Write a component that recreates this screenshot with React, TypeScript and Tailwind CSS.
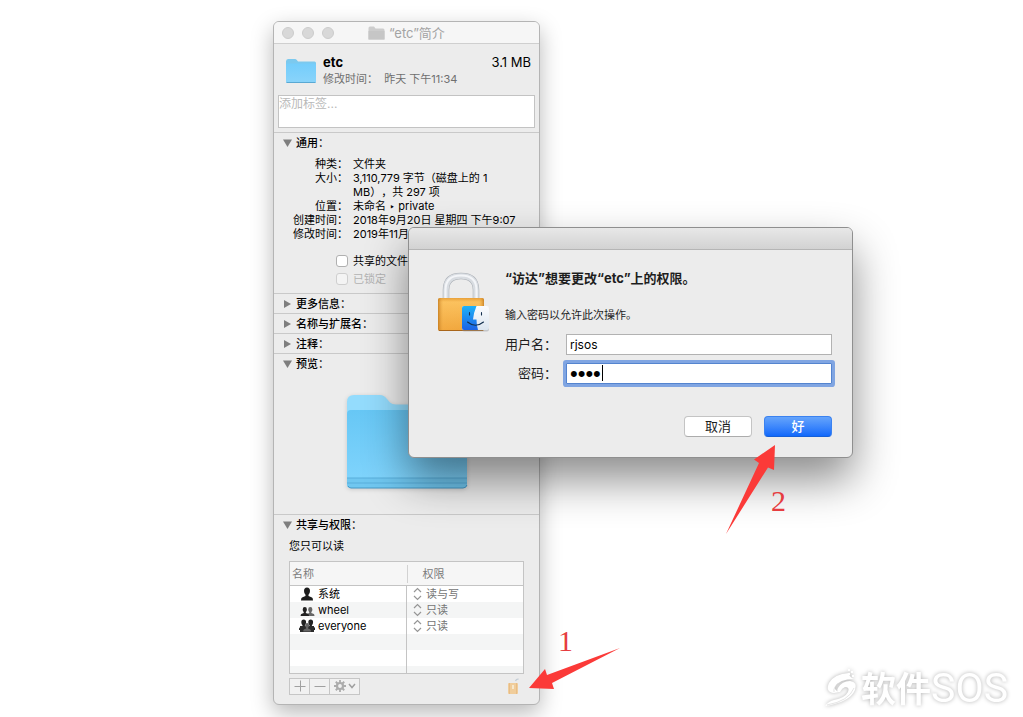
import type { ReactNode } from "react";

const FolderSmall = () => (
  <svg viewBox="0 0 32 27" className="h-[27px] w-8 shrink-0" aria-hidden="true">
    <defs>
      <linearGradient id="fs" x1="0" y1="0" x2="0" y2="1">
        <stop offset="0" stopColor="#74cdfb" />
        <stop offset="1" stopColor="#8ad4fa" />
      </linearGradient>
    </defs>
    <path d="M1 4.500Q1 2 3 2H10Q11 2 12 3.200L13 4.500H29.500Q31 4.500 31 6V25H1Z" fill="#7cc9ee" />
    <path d="M1 8Q1 6.500 2.500 6.500H29.500Q31 6.500 31 8V24.500Q31 26 29.500 26H2.500Q1 26 1 24.500Z" fill="url(#fs)" />
    <path d="M1.500 25.500H30.500" stroke="#5aa9d3" strokeWidth="1" />
  </svg>
);

const FolderLarge = () => (
  <svg viewBox="0 0 122 98" className="h-[98px] w-[122px] drop-shadow-sm" aria-hidden="true">
    <defs>
      <linearGradient id="fl" x1="0" y1="0" x2="0" y2="1">
        <stop offset="0" stopColor="#67c7f5" />
        <stop offset="1" stopColor="#82d5fd" />
      </linearGradient>
    </defs>
    <path d="M1 8Q1 1 8 1H34Q38 1 41 5L44 8.500Q46 10.500 50 10.500H114Q121 10.500 121 17V40H1Z" fill="#94dcfd" />
    <path d="M1 20Q1 16 5 16H117Q121 16 121 20V90Q121 94 117 94H5Q1 94 1 90Z" fill="url(#fl)" />
    <path d="M1 84H121V90Q121 94 117 94H5Q1 94 1 90Z" fill="#70c7f0" />
    <path d="M1 84H121M1 89H121" stroke="#58aedb" strokeWidth="1" />
    <path d="M2 92Q3 94 5 94H117Q120 94 121 91" stroke="#4698c5" strokeWidth="1" fill="none" />
  </svg>
);

const PadlockIcon = () => (
  <svg viewBox="0 0 54 64" className="h-16 w-[54px] shrink-0" aria-hidden="true">
    <defs>
      <linearGradient id="body" x1="0" y1="0" x2="0" y2="1">
        <stop offset="0" stopColor="#e59a32" />
        <stop offset="0.12" stopColor="#fbc05c" />
        <stop offset="1" stopColor="#eea035" />
      </linearGradient>
      <linearGradient id="sheen" x1="0" y1="0" x2="1" y2="0">
        <stop offset="0" stopColor="#b86d12" stopOpacity="0.7" />
        <stop offset="0.12" stopColor="#ffc968" stopOpacity="0.2" />
        <stop offset="0.88" stopColor="#ffc968" stopOpacity="0.1" />
        <stop offset="1" stopColor="#b86d12" stopOpacity="0.7" />
      </linearGradient>
      <linearGradient id="blue" x1="0" y1="0" x2="0" y2="1">
        <stop offset="0" stopColor="#1fb2f8" />
        <stop offset="1" stopColor="#1c62e4" />
      </linearGradient>
      <linearGradient id="pale" x1="0" y1="0" x2="0" y2="1">
        <stop offset="0" stopColor="#fbfcfe" />
        <stop offset="1" stopColor="#dbe5f0" />
      </linearGradient>
    </defs>
    <path d="M9 28V19Q9 5 24 5Q39 5 39 19V28" fill="none" stroke="#a9aeb4" strokeWidth="6.500" />
    <path d="M9 28V19Q9 5 24 5Q39 5 39 19V28" fill="none" stroke="#d8dce1" strokeWidth="5.500" />
    <path d="M8.500 28V19Q8.500 4.500 24 4.500Q39.500 4.500 39.500 19V28" fill="none" stroke="#f3f5f8" strokeWidth="2.200" />
    <rect x="1" y="27" width="46" height="33" rx="2" fill="url(#body)" />
    <rect x="1" y="27" width="46" height="33" rx="2" fill="url(#sheen)" />
    <path d="M2 59.500H46" stroke="#a9661b" strokeWidth="1" />
    <rect x="25" y="35.500" width="27" height="25" rx="2" fill="#8a8f95" opacity="0.4" />
    <rect x="25" y="35" width="27" height="24" rx="2" fill="url(#pale)" />
    <path d="M27 35H39.500Q36.500 42 36 48.500H39.500Q39.500 54 41 59H27Q25 59 25 57V37Q25 35 27 35Z" fill="url(#blue)" />
    <path d="M32.500 41.500V44M44.500 41.500V44" stroke="#14304f" strokeWidth="1.100" strokeLinecap="round" />
    <path d="M30.500 51Q38.500 57.500 46.500 51" fill="none" stroke="#14304f" strokeWidth="1.100" strokeLinecap="round" />
  </svg>
);

const person = (x: number, y: number, s: number, fill: string) => (
  <path
    transform={`translate(${x} ${y}) scale(${s})`}
    fill={fill}
    d="M4 0Q7 0 7 3.500Q7 6 5.500 7.200V8.500L9 10Q10 10.500 10 13H-2Q-2 10.500 -1 10L2.500 8.500V7.200Q1 6 1 3.500Q1 0 4 0Z"
  />
);

const UserIcon = ({ kind }: { kind: "one" | "two" | "many" }) => (
  <svg viewBox="0 0 16 14" className="h-3.5 w-4 shrink-0" aria-hidden="true">
    {kind === "one" && person(4, 0.5, 1, "#1c1c1c")}
    {kind === "two" && (
      <>
        {person(8.5, 4, 0.7, "#666")}
        {person(3, 4, 0.7, "#222")}
      </>
    )}
    {kind === "many" && (
      <>
        {person(1.5, 0.5, 0.8, "#222")}
        {person(8.5, 0.5, 0.8, "#222")}
        <path d="M1 7H15V13H1Z" fill="#2c2c2c" />
        {person(5.5, 4, 0.65, "#666")}
      </>
    )}
  </svg>
);

const Triangle = ({ open }: { open: boolean }) => (
  <svg viewBox="0 0 10 10" className="size-2.5 shrink-0" aria-hidden="true">
    <path d={open ? "M1 1.500H10L5.500 9Z" : "M2 1V9L9 5Z"} fill="#7e7e7e" />
  </svg>
);

function Section({ title, open = false, children }: { title: string; open?: boolean; children?: ReactNode }) {
  return (
    <section className="border-t border-[#c9c9c9]">
      <button type="button" aria-expanded={open} className="flex h-[19px] w-full items-center gap-1 pl-2 text-left font-medium">
        <Triangle open={open} />
        {title}
      </button>
      {children}
    </section>
  );
}

const facts = [
  ["种类：", "文件夹"],
  ["大小：", "3,110,779 字节（磁盘上的 1 MB），共 297 项"],
  ["位置：", "未命名 ‣ private"],
  ["创建时间：", "2018年9月20日 星期四 下午9:07"],
  ["修改时间：", "2019年11月12日 星期二 下午11:34"],
];

const users: { name: string; access: string; kind: "one" | "two" | "many" }[] = [
  { name: "系统", access: "读与写", kind: "one" },
  { name: "wheel", access: "只读", kind: "two" },
  { name: "everyone", access: "只读", kind: "many" },
];

function InfoWindow() {
  return (
    <article className="absolute top-[21px] left-[273px] w-[267px] overflow-hidden rounded-md border border-[#b4b4b4] bg-[#ececec] text-[11px] leading-[14px] text-black shadow-[0_8px_22px_rgba(0,0,0,0.28)]">
      <header className="relative flex h-[22px] items-center justify-center gap-1 border-b border-[#cfcfcf] bg-[#f6f6f6] text-[13px] text-[#a3a3a3]">
        <div className="absolute left-2 flex gap-2">
          {["关闭", "最小化", "缩放"].map((n) => (
            <button key={n} type="button" aria-label={n} className="size-3 rounded-full border border-[#cccccc] bg-[#d8d8d8]" />
          ))}
        </div>
        <svg viewBox="0 0 17 14" className="h-3.5 w-[17px]" aria-hidden="true">
          <path d="M0.500 2Q0.500 0.500 2 0.500H6L7.500 2.500H15Q16.500 2.500 16.500 4V13.500H0.500Z" fill="#cdcdcd" />
          <path d="M0.500 5H16.500V13.500H0.500Z" fill="#c6c6c6" />
        </svg>
        <h1>“etc”简介</h1>
      </header>

      <div className="flex gap-1.5 pt-[9px] pr-2 pl-[11px]">
        <div className="pt-1">
          <FolderSmall />
        </div>
        <div className="flex-1">
          <div className="flex justify-between text-[13px] leading-[18px]">
            <strong className="font-bold">etc</strong>
            <span>3.1 MB</span>
          </div>
          <p className="leading-4 text-[#6f6f6f]">修改时间：&nbsp; 昨天 下午11:34</p>
        </div>
      </div>
      <div className="px-1 pt-2 pb-1">
        <textarea
          aria-label="标签"
          placeholder="添加标签..."
          className="block h-[33px] w-full resize-none border border-[#c3c3c3] bg-white text-[12px] leading-4 outline-none placeholder:text-[#b9b9b9]"
        />
      </div>

      <Section title="通用：" open>
        <dl className="grid grid-cols-[74px_1fr] gap-x-[5px] pt-[5px] pr-[26px] [text-spacing-trim:space-all]">
          {facts.map(([k, v], i) => (
            <div key={i} className="contents">
              <dt className="text-right">{k}</dt>
              <dd className={i > 2 ? "whitespace-nowrap" : ""}>{v}</dd>
            </div>
          ))}
        </dl>
        <div className="flex flex-col pt-[11px] pb-[5px] pl-[62px]">
          <label className="flex h-[18px] items-center gap-[5px] whitespace-nowrap">
            <input type="checkbox" className="size-3 appearance-none rounded-[3px] border border-[#b0b0b0] bg-white" />
            共享的文件夹
          </label>
          <label className="flex h-[18px] items-center gap-[5px] text-[#b3b3b3]">
            <input type="checkbox" disabled className="size-3 appearance-none rounded-[3px] border border-[#cfcfcf] bg-[#f4f4f4]" />
            已锁定
          </label>
        </div>
      </Section>
      <Section title="更多信息：" />
      <Section title="名称与扩展名：" />
      <Section title="注释：" />
      <Section title="预览：" open>
        <div className="flex justify-center pt-[21px] pb-[22px] pl-px">
          <FolderLarge />
        </div>
      </Section>
      <Section title="共享与权限：" open>
        <div className="px-[15px] pt-1 pb-[9px]">
          <p className="leading-4">您只可以读</p>
          <table className="mt-[7px] w-full table-fixed border-collapse border border-[#c4c4c4] bg-white">
            <thead>
              <tr className="h-6 border-b border-[#c4c4c4] bg-[#f6f6f6] text-left text-[#7b7b7b]">
                <th className="w-1/2 p-0 pl-0.5 font-normal">名称</th>
                <th className="p-0 font-normal">
                  <span className="block border-l border-[#d2d2d2] pl-[15px] leading-[18px]">权限</span>
                </th>
              </tr>
            </thead>
            <tbody>
              {users.map((u) => (
                <tr key={u.name} className="h-4 even:bg-[#f4f5f5]">
                  <td className="border-r border-[#c4c4c4] p-0">
                    <span className="flex h-4 items-center gap-[3px] pl-[9px]">
                      <UserIcon kind={u.kind} />
                      {u.name}
                    </span>
                  </td>
                  <td className="p-0">
                    <span className="flex h-4 items-center gap-1 pl-1.5">
                      <svg viewBox="0 0 9 14" className="h-3.5 w-[9px]" fill="none" stroke="#969696" strokeWidth="1.200" aria-hidden="true">
                        <path d="M1 5L4.500 1.500L8 5M1 9L4.500 12.500L8 9" />
                      </svg>
                      <select disabled aria-label={`${u.name} 权限`} className="h-4 appearance-none bg-transparent leading-4 text-[#757575] opacity-100">
                        <option>{u.access}</option>
                      </select>
                    </span>
                  </td>
                </tr>
              ))}
              <tr className="h-4 bg-[#f4f5f5]">
                <td className="border-r border-[#c4c4c4] p-0" />
                <td className="p-0" />
              </tr>
              <tr className="h-4">
                <td className="border-r border-[#c4c4c4] p-0" />
                <td className="p-0" />
              </tr>
              <tr className="h-[7px] bg-[#f4f5f5]">
                <td className="border-r border-[#c4c4c4] p-0" />
                <td className="p-0" />
              </tr>
            </tbody>
          </table>
          <div className="mt-1 flex items-center justify-between">
            <div className="flex h-[17px] divide-x divide-[#c6c6c6] border border-[#c6c6c6] bg-[#f1f1f1]">
              <button type="button" aria-label="添加" className="grid w-5 place-items-center">
                <svg viewBox="0 0 12 12" className="size-3" stroke="#a0a0a0" aria-hidden="true">
                  <path d="M0.500 6.500H11.500M6.500 0.500V11.500" />
                </svg>
              </button>
              <button type="button" aria-label="移除" className="grid w-5 place-items-center">
                <svg viewBox="0 0 12 12" className="size-3" stroke="#a0a0a0" aria-hidden="true">
                  <path d="M0.500 6.500H11.500" />
                </svg>
              </button>
              <button type="button" aria-label="操作" className="flex w-[29px] items-center justify-center gap-0.5">
                <svg viewBox="0 0 12 12" className="size-3" fill="none" stroke="#acacac" aria-hidden="true">
                  <circle cx="6" cy="6" r="3" strokeWidth="2.200" />
                  <path d="M6 0V2.500M6 9.500V12M0 6H2.500M9.500 6H12M1.760 1.760L3.500 3.500M8.500 8.500L10.240 10.240M10.240 1.760L8.500 3.500M3.500 8.500L1.760 10.240" strokeWidth="1.800" />
                </svg>
                <svg viewBox="0 0 8 6" className="h-1.5 w-2" fill="none" stroke="#a0a0a0" strokeWidth="1.500" aria-hidden="true">
                  <path d="M1 1L4 4.500L7 1" />
                </svg>
              </button>
            </div>
            <button type="button" aria-label="解锁" className="mr-1">
              <svg viewBox="0 0 13 17" className="h-[17px] w-[13px]" aria-hidden="true">
                <path d="M8.500 3Q9.500 0.800 11.500 1.200" fill="none" stroke="#c3cdd6" strokeWidth="1.400" />
                <rect x="1" y="5" width="10" height="11" rx="1" fill="#f0cd9b" />
                <path d="M2.500 5V16M9.500 5V16" stroke="#e8bd86" />
                <path d="M6 7V11" stroke="#faf0dd" strokeWidth="1.500" />
              </svg>
            </button>
          </div>
        </div>
      </Section>
    </article>
  );
}

function PasswordDialog() {
  return (
    <form
      role="dialog"
      aria-labelledby="dialog-title"
      onSubmit={(e) => e.preventDefault()}
      className="absolute top-[227px] left-[408px] w-[445px] overflow-hidden rounded-md border border-[#8f8f8f] bg-[#ececec] text-[13px] text-[#1e1e1e] shadow-[0_22px_44px_rgba(0,0,0,0.45)]"
    >
      <div className="h-[22px] border-b border-[#b5b5b5] bg-linear-to-b from-[#e8e8e8] to-[#d2d2d2]" />
      <div className="flex gap-3.5 pt-[19px] pr-5 pb-5 pl-7">
        <div className="pt-0.5">
          <PadlockIcon />
        </div>
        <div className="flex-1">
          <h2 id="dialog-title" className="leading-[18px] font-bold">
            “访达”想要更改“etc”上的权限。
          </h2>
          <p className="mt-5 text-[11px] leading-4">输入密码以允许此次操作。</p>
          <div className="mt-[11px] grid grid-cols-[52px_1fr] items-center gap-x-[9px] gap-y-2">
            <label htmlFor="user" className="text-right">用户名：</label>
            <input id="user" type="text" defaultValue="rjsos" className="h-[21px] w-full border border-[#b2b2b2] bg-white px-[3px] text-[12px] text-black outline-none" />
            <label htmlFor="pass" className="text-right">密码：</label>
            <div className="relative flex">
              <input
                id="pass"
                type="password"
                defaultValue="0000"
                className="h-[21px] w-full rounded-[1px] border border-[#5484cf] bg-white px-[3px] font-['Liberation_Sans',sans-serif] text-[22px] leading-[19px] text-black ring-3 ring-[#80a5e2] outline-none"
              />
              <span className="absolute top-0.5 left-9 h-4 w-px bg-black" />
            </div>
          </div>
          <div className="mt-8 flex justify-end gap-3">
            <button type="button" className="h-[21px] w-[68px] rounded border border-[#c4c4c4] border-b-[#acacac] bg-white pb-0.5 leading-4">
              取消
            </button>
            <button type="submit" className="h-[21px] w-[68px] rounded border border-[#3b82f0] border-b-[#155fd8] bg-linear-to-b from-[#65a4fb] to-[#0f68fb] pb-0.5 leading-4 font-medium text-white">
              好
            </button>
          </div>
        </div>
      </div>
    </form>
  );
}

export default function App() {
  return (
    <main className="relative min-h-screen overflow-hidden bg-white font-[Inter,'Noto_Sans_CJK_SC',sans-serif]">
      <InfoWindow />
      <PasswordDialog />

      <svg viewBox="0 0 50 90" className="absolute top-[445px] left-[726px] h-[90px] w-[50px]" fill="#fb3a38" aria-hidden="true">
        <path d="M49 0L28 14.500L33 18L0 89L42 22.500L48 25Z" />
      </svg>
      <span className="absolute top-[483px] left-[771px] font-['Liberation_Serif',serif] text-[30px] leading-9 text-[#e63c40]">2</span>
      <svg viewBox="0 0 92 42" className="absolute top-[648px] left-[529px] h-[42px] w-[92px]" fill="#fb3a38" aria-hidden="true">
        <path d="M0 40L16 21L18 27L91 0L23 35L25 41Z" />
      </svg>
      <span className="absolute top-[623px] left-[558px] font-['Liberation_Serif',serif] text-[30px] leading-9 text-[#e63c40]">1</span>

      <div className="absolute right-[15px] bottom-[3px] flex items-center gap-0.5 text-white drop-shadow-[0_0_2px_rgba(0,0,0,0.3)]">
        <svg viewBox="0 0 34 40" className="h-10 w-[34px]" aria-hidden="true">
          <path
            d="M24 5Q9 6 4 15Q0 24 9 25L14 24Q9 22 10 19Q14 11 29 11Q24 9 24 5ZM13 20Q17 13 25 13Q33 14 30 22Q25 34 0 38Q4 33 9 32Q20 30 23 24Q25 19 20 19Q17 20 15 24Q11 24 13 20Z"
            fill="currentColor"
          />
          <path d="M2 37Q24 33 29 20" fill="none" stroke="#d8d8d8" strokeWidth="0.700" />
          <path d="M9 24Q8 19 14 15" fill="none" stroke="#d8d8d8" strokeWidth="0.700" />
          <path d="M23 1H25V3H23ZM26 3H28V5H26ZM23 5H25V7H23ZM27 7H29V9H27Z" fill="currentColor" />
        </svg>
        <p className="flex items-baseline leading-[52px]">
          <span className="font-['Noto_Sans_CJK_SC',sans-serif] text-[35px] font-bold">软件</span>
          <span className="font-[Roboto,sans-serif] text-[41px]">SOS</span>
        </p>
      </div>
    </main>
  );
}
